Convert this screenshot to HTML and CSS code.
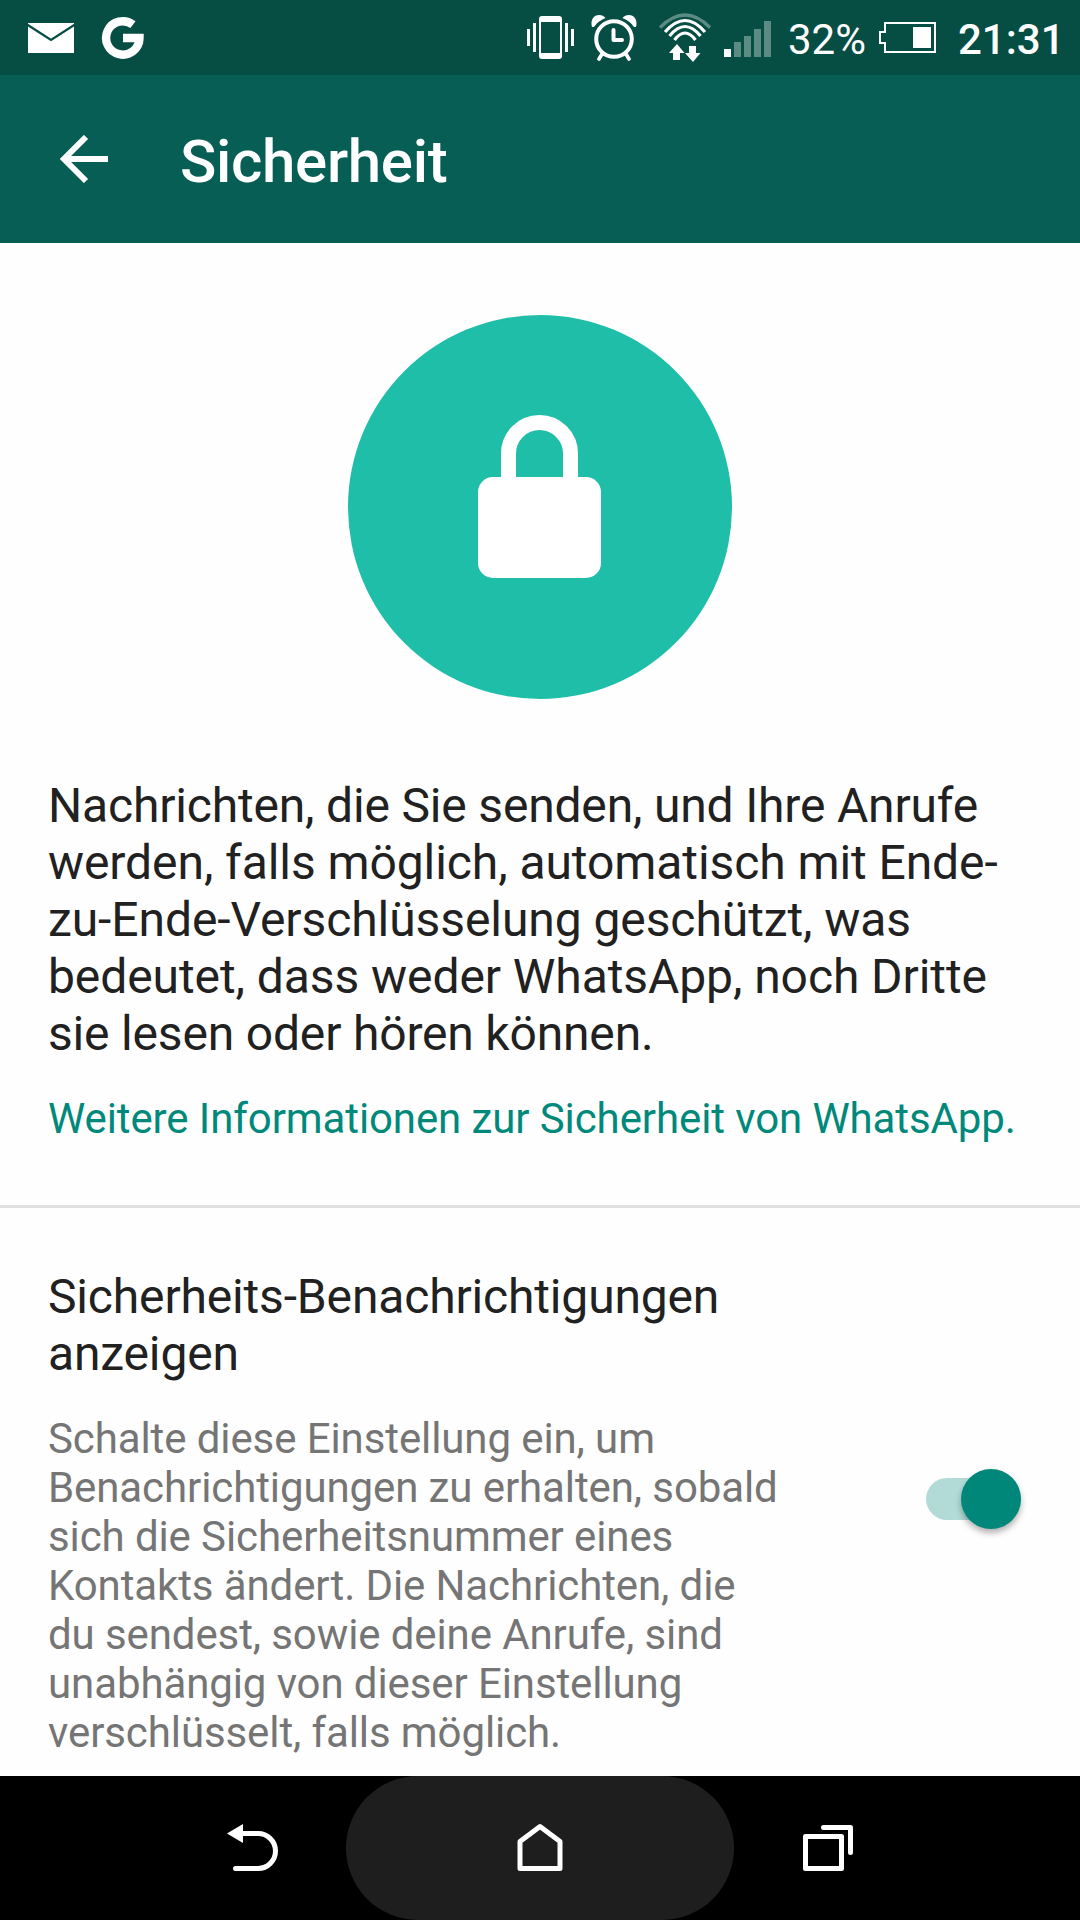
FILE: index.html
```html
<!DOCTYPE html>
<html lang="de">
<head>
    <meta charset="UTF-8">
    <meta name="viewport" content="width=device-width, initial-scale=1.0">
    <title>Sicherheit</title>
    <link rel="stylesheet" href="styles.css">
</head>
<body>

<div class="screen">
    <!-- Status bar -->
    <div class="status-bar">
        <svg class="icon-mail" width="46" height="30" viewBox="0 0 46 30">
            <rect width="46" height="30" fill="#fff"/>
            <path d="M-1 1.5L23 17L47 1.5" fill="none" stroke="#064d43" stroke-width="2.2"/>
        </svg>
        <svg class="icon-google" width="44" height="44" viewBox="0 0 44 44">
            <path d="M32 8.700A16.700 16.700 0 1 0 38.500 22H22" fill="none" stroke="#fff" stroke-width="8.4"/>
        </svg>
        <div class="status-right">
            <svg class="icon-vibrate" width="47" height="43" viewBox="0 0 47 43" fill="#fff">
                <path fill-rule="evenodd" d="M15 0H32Q35 0 35 3V40Q35 43 32 43H15Q12 43 12 40V3Q12 0 15 0ZM14 6V37H33V6Z"/>
                <path d="M0 13h3v17H0zM6 7h3v29H6zM38 7h3v29h-3zM44 13h3v17h-3z"/>
            </svg>
            <svg class="icon-alarm" width="46" height="46" viewBox="0 0 46 46" fill="none" stroke="#fff">
                <circle cx="23" cy="24" r="17.8" stroke-width="4"/>
                <path d="M22.5 15V25H31" stroke-width="4" stroke-linecap="round" stroke-linejoin="round"/>
                <path d="M11 39L8 44M35 39L38 44" stroke-width="3.6" stroke-linecap="round"/>
                <path d="M1 12C-1 5 3 0 8 0C11 0 13 1 14.500 3Q7 6 3 12ZM45 12C47 5 43 0 38 0C35 0 33 1 31.500 3Q39 6 43 12Z" fill="#fff" stroke="none"/>
            </svg>
            <svg class="icon-wifi" width="52" height="50" viewBox="0 0 52 50" fill="none" stroke="#fff" stroke-width="3.2">
                <path d="M1 14.500Q26 -10.500 51 14.500" opacity=".35"/>
                <path d="M6 19Q26 -4 46 19M10.500 23Q26 4 41.500 23M15.500 27Q26 13 36.500 27"/>
                <path d="M18 31L25.500 40H21V47H14V40H10ZM30 33H37V40H41.500L34 49L26 40H30Z" fill="#fff" stroke="none"/>
            </svg>
            <svg class="icon-signal" width="47" height="36" viewBox="0 0 47 36" fill="#fff">
                <path d="M0 28h7v8H0z"/>
                <path d="M10 21h7v15h-7zM20 15h7v21h-7zM30 8h7v28h-7zM40 0h7v36h-7z" opacity=".35"/>
            </svg>
            <span class="battery-text">32%</span>
            <svg class="icon-battery" width="57" height="31" viewBox="0 0 57 31">
                <path d="M6 1H56V30H6V21H1V10H6Z" fill="none" stroke="#fff" stroke-width="2"/>
                <rect x="34" y="5" width="18" height="21" fill="#fff"/>
            </svg>
            <span class="clock">21:31</span>
        </div>
    </div>

    <!-- App bar -->
    <div class="app-bar">
        <svg class="icon-back" width="48" height="48" viewBox="0 0 48 48">
            <path d="M26 2L4 24L26 46M4 24H48" fill="none" stroke="#fff" stroke-width="6"/>
        </svg>
        <h1>Sicherheit</h1>
    </div>

    <!-- Encryption info -->
    <div class="info">
        <svg class="lock" width="384" height="384" viewBox="0 0 384 384">
            <circle cx="192" cy="192" r="192" fill="#1fbea8"/>
            <rect x="130" y="162" width="123" height="101" rx="15" fill="#fff"/>
            <path d="M160.500 166V138.500A31 31 0 0 1 222.500 138.500V166" fill="none" stroke="#fff" stroke-width="15"/>
        </svg>
        <p class="info-text"><span class="tight">Nachrichten, die Sie senden, und Ihre Anrufe</span> werden, falls möglich, automatisch mit Ende-zu-Ende-Verschlüsselung geschützt, was bedeutet, dass weder WhatsApp, noch Dritte <span class="tight">sie lesen oder hören können.</span></p>
        <a class="info-link">Weitere Informationen zur Sicherheit von WhatsApp.</a>
    </div>

    <!-- Notification setting -->
    <div class="setting">
        <div class="setting-text">
            <h2>Sicherheits-Benachrichtigungen anzeigen</h2>
            <p>Schalte diese Einstellung ein, um Benachrichtigungen zu erhalten, sobald sich die Sicherheitsnummer eines Kontakts ändert. Die Nachrichten, die du sendest, sowie deine Anrufe, sind unabhängig von dieser Einstellung verschlüsselt, falls möglich.</p>
        </div>
        <div class="switch">
            <div class="thumb"></div>
        </div>
    </div>

    <!-- Navigation bar -->
    <div class="nav-bar">
        <div class="nav-item nav-back">
            <svg width="52" height="50" viewBox="0 0 52 50">
                <path d="M14 10.500H31A17.500 17.500 0 0 1 31 45.500H8.500" fill="none" stroke="#fff" stroke-width="5" stroke-linecap="round"/>
                <path d="M0 10.500L16 1V20Z" fill="#fff"/>
            </svg>
        </div>
        <div class="nav-item nav-home">
            <svg width="46" height="50" viewBox="0 0 46 50">
                <path d="M3 18.500L23 3.500L43 18.500V45.500H3Z" fill="none" stroke="#fff" stroke-width="5" stroke-linejoin="round"/>
            </svg>
        </div>
        <div class="nav-item nav-recent">
            <svg width="50" height="50" viewBox="0 0 50 50" fill="none" stroke="#fff" stroke-width="5" stroke-linecap="round" stroke-linejoin="round">
                <path d="M2.500 13.500H38.500V45.500H2.500Z"/>
                <path d="M20.500 4.500H47.500V29.500"/>
            </svg>
        </div>
    </div>
</div>

</body>
</html>
```
FILE: styles.css
```css
* {
    box-sizing: border-box;
}
body {
    font-family: Roboto, sans-serif;
    background-color: #fefefe;
    margin: 0;
}
h1, h2, p {
    margin: 0;
    font-weight: normal;
}
svg {
    display: block;
    flex-shrink: 0;
}
.screen {
    width: 1080px;
    height: 1920px;
    display: flex;
    flex-direction: column;
    overflow: hidden;
}

/* Status bar */
.status-bar {
    height: 75px;
    background-color: #064d43;
    color: #fff;
    display: flex;
    align-items: flex-start;
    padding: 0 20px 0 28px;
}
.icon-mail {
    margin-top: 23px;
}
.icon-google {
    margin: 16px 0 0 27px;
}
.status-right {
    display: flex;
    align-items: flex-start;
    margin-left: auto;
}
.icon-vibrate {
    margin-top: 16px;
}
.icon-alarm {
    margin: 15px 0 0 17px;
}
.icon-wifi {
    margin: 13px 0 0 22px;
}
.icon-signal {
    margin: 21px 0 0 13px;
}
.battery-text {
    width: 78px;
    margin: 15px 0 0 17px;
    font-size: 42px;
    line-height: 50px;
    white-space: nowrap;
}
.icon-battery {
    margin: 22px 0 0 13px;
}
.clock {
    width: 102px;
    margin: 15px 0 0 22px;
    font-size: 42px;
    font-weight: 500;
    line-height: 50px;
    white-space: nowrap;
}

/* App bar */
.app-bar {
    height: 168px;
    background-color: #075e54;
    color: #fff;
    display: flex;
    align-items: center;
    padding-left: 60px;
}
.app-bar h1 {
    margin: 6px 0 0 72px;
    font-size: 60px;
    font-weight: 500;
    line-height: 70px;
    letter-spacing: -0.3px;
}

/* Encryption info */
.info {
    height: 965px;
    padding: 72px 48px 0;
    border-bottom: 3px solid #e0e0e0;
}
.lock {
    margin: 0 auto;
}
.info-text {
    margin-top: 78px;
    color: #212121;
    font-size: 48px;
    line-height: 57px;
    letter-spacing: -0.08px;
}
.tight {
    letter-spacing: -0.18px;
}
.info-link {
    display: block;
    margin-top: 32px;
    color: #00897b;
    font-size: 42px;
    line-height: 49px;
    letter-spacing: -0.1px;
    white-space: nowrap;
}

/* Notification setting */
.setting {
    flex: 1;
    display: flex;
    justify-content: space-between;
    padding: 60px 59px 0 48px;
}
.setting-text {
    width: 738px;
}
.setting h2 {
    color: #212121;
    font-size: 48px;
    line-height: 57px;
    letter-spacing: -0.16px;
}
.setting p {
    margin-top: 32px;
    color: #757575;
    font-size: 42px;
    line-height: 49px;
    letter-spacing: -0.1px;
}
.switch {
    display: flex;
    align-items: center;
    justify-content: flex-end;
    width: 95px;
    height: 42px;
    margin-top: 210px;
    border-radius: 21px;
    background-color: #b2dbd7;
}
.thumb {
    flex-shrink: 0;
    width: 60px;
    height: 60px;
    border-radius: 50%;
    background-color: #008779;
    box-shadow: 0 4px 6px rgba(0, 0, 0, 0.3);
}

/* Navigation bar */
.nav-bar {
    height: 144px;
    background-color: #000;
    display: flex;
    justify-content: center;
}
.nav-item {
    display: flex;
    align-items: center;
    justify-content: center;
}
.nav-back {
    width: 186px;
}
.nav-home {
    width: 388px;
    border-radius: 72px;
    background-color: #1e1e1e;
}
.nav-recent {
    width: 186px;
    padding-left: 2px;
}
```
